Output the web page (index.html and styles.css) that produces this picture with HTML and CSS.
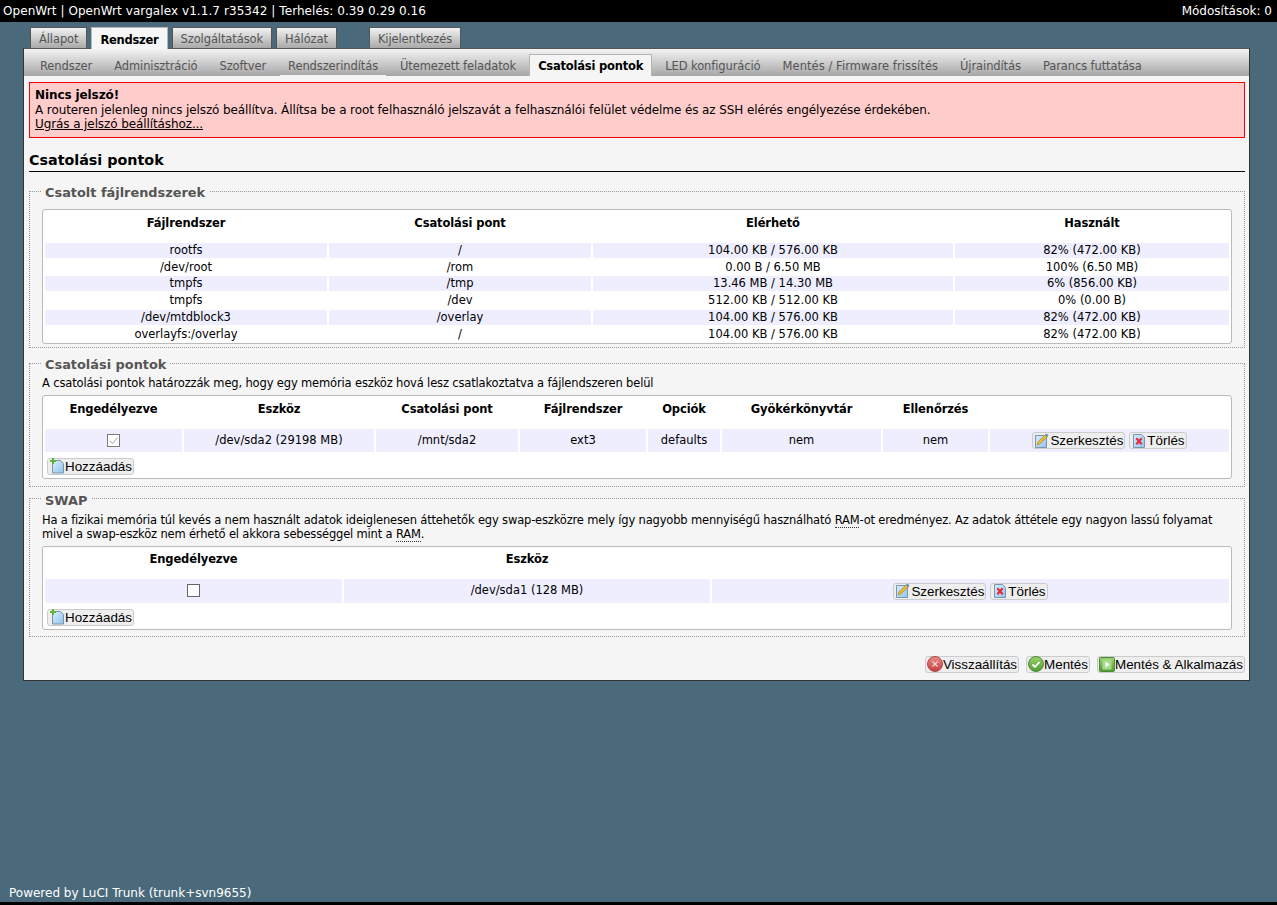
FILE: index.html
```html
<!DOCTYPE html>
<html lang="hu">
<head>
<meta charset="utf-8">
<title>Csatolási pontok - LuCI</title>
<link rel="stylesheet" href="styles.css">
</head>
<body>
<svg class="defs" width="0" height="0" aria-hidden="true">
  <defs>
    <linearGradient id="page" x1="0" y1="0" x2="1" y2="1"><stop offset="0" stop-color="#d8edff"/><stop offset="1" stop-color="#8fc4ee"/></linearGradient>
    <linearGradient id="green" x1="0" y1="0" x2="0" y2="1"><stop offset="0" stop-color="#9bd46c"/><stop offset="1" stop-color="#4f9a35"/></linearGradient>
    <linearGradient id="red" x1="0" y1="0" x2="0" y2="1"><stop offset="0" stop-color="#ee8a8a"/><stop offset="1" stop-color="#c53d3d"/></linearGradient>
    <symbol id="i-add" viewBox="0 0 16 16"><path d="M3.500 2.500h8l3 3v9.500h-11z" fill="url(#page)" stroke="#7d93a6"/><path d="M3 0v2H1v2h2v2h2V4h2V2H5V0z" fill="#5fb336"/></symbol>
    <symbol id="i-edit" viewBox="0 0 16 16"><path d="M1.500 2.500h11v12h-11z" fill="url(#page)" stroke="#7d93a6"/><path d="M3 12l1-3 8-8 2 2-8 8z" fill="#e9b93a" stroke="#a8802a" stroke-width=".6"/><path d="M11 2l2 2 1.500-1.500-2-2z" fill="#5d8fc4"/></symbol>
    <symbol id="i-del" viewBox="0 0 16 16"><path d="M2.500 1.500h8l3 3v10h-11z" fill="url(#page)" stroke="#7d93a6"/><path d="M4.500 6l1.500-1.500L8 6.500l2-2L11.500 6l-2 2.200 2 2.300L10 12l-2-2-2 2-1.500-1.500 2-2.300z" fill="#e22f3c"/></symbol>
    <symbol id="i-reset" viewBox="0 0 16 16"><circle cx="8" cy="8" r="7.500" fill="url(#red)" stroke="#a94b4b"/><path d="M5.500 5.500l5 5m0-5l-5 5" stroke="#f6d4d4" stroke-width="1.300"/></symbol>
    <symbol id="i-save" viewBox="0 0 16 16"><circle cx="8" cy="8" r="7.500" fill="url(#green)" stroke="#4b8a39"/><path d="M4.500 8.500l2.500 2.500 4.500-5" fill="none" stroke="#fff" stroke-width="1.800"/></symbol>
    <symbol id="i-apply" viewBox="0 0 16 16"><rect x=".5" y="1.500" width="15" height="14" rx="1" fill="url(#green)" stroke="#4b8a39"/><rect x="3.500" y="3.500" width="9" height="10" fill="#a8d98c"/><path d="M6.500 5.500l4 3-4 3z" fill="#fff"/></symbol>
  </defs>
</svg>

<header class="topbar">
  <span class="status">OpenWrt | OpenWrt vargalex v1.1.7 r35342 | Terhelés: 0.39 0.29 0.16</span>
  <span>Módosítások: 0</span>
</header>

<nav class="mainnav">
  <a class="maintab">Állapot</a>
  <a class="maintab active">Rendszer</a>
  <a class="maintab">Szolgáltatások</a>
  <a class="maintab">Hálózat</a>
  <a class="maintab logout">Kijelentkezés</a>
</nav>

<main class="panel">
  <nav class="subnav">
    <a class="subtab">Rendszer</a>
    <a class="subtab">Adminisztráció</a>
    <a class="subtab">Szoftver</a>
    <a class="subtab hover">Rendszerindítás</a>
    <a class="subtab">Ütemezett feladatok</a>
    <a class="subtab active">Csatolási pontok</a>
    <a class="subtab">LED konfiguráció</a>
    <a class="subtab wide">Mentés / Firmware frissítés</a>
    <a class="subtab">Újraindítás</a>
    <a class="subtab">Parancs futtatása</a>
  </nav>

  <div class="alert">
    <strong>Nincs jelszó!</strong><br>
    A routeren jelenleg nincs jelszó beállítva. Állítsa be a root felhasználó jelszavát a felhasználói felület védelme és az SSH elérés engélyezése érdekében.<br>
    <a class="alert-link">Ugrás a jelszó beállításhoz...</a>
  </div>

  <h2 class="title">Csatolási pontok</h2>

  <fieldset class="section first">
    <legend>Csatolt fájlrendszerek</legend>
    <div class="tablebox">
      <table class="grid mounted">
        <colgroup><col class="c1a"><col class="c1b"><col class="c1c"><col class="c1d"></colgroup>
        <tr class="head"><th>Fájlrendszer</th><th>Csatolási pont</th><th>Elérhető</th><th>Használt</th></tr>
        <tr class="odd"><td>rootfs</td><td>/</td><td>104.00 KB / 576.00 KB</td><td>82% (472.00 KB)</td></tr>
        <tr><td>/dev/root</td><td>/rom</td><td>0.00 B / 6.50 MB</td><td>100% (6.50 MB)</td></tr>
        <tr class="odd"><td>tmpfs</td><td>/tmp</td><td>13.46 MB / 14.30 MB</td><td>6% (856.00 KB)</td></tr>
        <tr><td>tmpfs</td><td>/dev</td><td>512.00 KB / 512.00 KB</td><td>0% (0.00 B)</td></tr>
        <tr class="odd"><td>/dev/mtdblock3</td><td>/overlay</td><td>104.00 KB / 576.00 KB</td><td>82% (472.00 KB)</td></tr>
        <tr><td>overlayfs:/overlay</td><td>/</td><td>104.00 KB / 576.00 KB</td><td>82% (472.00 KB)</td></tr>
      </table>
    </div>
  </fieldset>

  <fieldset class="section second">
    <legend>Csatolási pontok</legend>
    <p class="desc">A csatolási pontok határozzák meg, hogy egy memória eszköz hová lesz csatlakoztatva a fájlendszeren belül</p>
    <div class="tablebox">
      <table class="grid mounts">
        <colgroup><col class="c2a"><col class="c2b"><col class="c2c"><col class="c2d"><col class="c2e"><col class="c2f"><col class="c2g"><col class="c2h"></colgroup>
        <tr class="head"><th>Engedélyezve</th><th>Eszköz</th><th>Csatolási pont</th><th>Fájlrendszer</th><th>Opciók</th><th>Gyökérkönyvtár</th><th>Ellenőrzés</th><th></th></tr>
        <tr class="odd tall">
          <td><span class="check on"><svg viewBox="0 0 11 11"><path d="M2 6l2.500 2.500L9.500 2.500" fill="none" stroke="#9aa0a6"/></svg></span></td>
          <td>/dev/sda2 (29198 MB)</td><td>/mnt/sda2</td><td>ext3</td><td>defaults</td><td>nem</td><td>nem</td>
          <td class="actions"><button class="btn"><svg class="ico"><use href="#i-edit"/></svg>Szerkesztés</button><button class="btn"><svg class="ico"><use href="#i-del"/></svg>Törlés</button></td>
        </tr>
      </table>
      <div class="addrow"><button class="btn"><svg class="ico"><use href="#i-add"/></svg>Hozzáadás</button></div>
    </div>
  </fieldset>

  <fieldset class="section third">
    <legend>SWAP</legend>
    <p class="desc">Ha a fizikai memória túl kevés a nem használt adatok ideiglenesen áttehetők egy swap-eszközre mely így nagyobb mennyiségű használható <abbr>RAM</abbr>-ot eredményez. Az adatok áttétele egy nagyon lassú folyamat mivel a swap-eszköz nem érhető el akkora sebességgel mint a <abbr>RAM</abbr>.</p>
    <div class="tablebox">
      <table class="grid swap">
        <colgroup><col class="c3a"><col class="c3b"><col class="c3c"></colgroup>
        <tr class="head"><th>Engedélyezve</th><th>Eszköz</th><th></th></tr>
        <tr class="odd tall">
          <td><span class="check"></span></td>
          <td>/dev/sda1 (128 MB)</td>
          <td class="actions"><button class="btn"><svg class="ico"><use href="#i-edit"/></svg>Szerkesztés</button><button class="btn"><svg class="ico"><use href="#i-del"/></svg>Törlés</button></td>
        </tr>
      </table>
      <div class="addrow"><button class="btn"><svg class="ico"><use href="#i-add"/></svg>Hozzáadás</button></div>
    </div>
  </fieldset>

  <div class="formactions">
    <button class="btn"><svg class="ico"><use href="#i-reset"/></svg>Visszaállítás</button>
    <button class="btn"><svg class="ico"><use href="#i-save"/></svg>Mentés</button>
    <button class="btn"><svg class="ico"><use href="#i-apply"/></svg>Mentés &amp; Alkalmazás</button>
  </div>
</main>

<footer class="footer">Powered by LuCI Trunk (trunk+svn9655)</footer>
</body>
</html>
```
FILE: styles.css
```css
* { box-sizing: border-box; }
html, body { height: 100%; }
body {
  margin: 0;
  height: 905px;
  overflow: hidden;
  background: #4a6a7c;
  border-bottom: 3px solid #000;
  display: flex;
  flex-direction: column;
  font-family: "DejaVu Sans", Verdana, sans-serif;
  font-size: 11.5px;
  color: #000;
}
.defs { position: absolute; }

.topbar {
  height: 22px;
  flex: none;
  background: #000;
  color: #fff;
  padding: 0 5px 0 3px;
  display: flex;
  justify-content: space-between;
  align-items: center;
  font-size: 12px;
}
.status { letter-spacing: .07px; }

.mainnav {
  flex: none;
  display: flex;
  gap: 4px;
  height: 26px;
  padding: 5px 0 0 30px;
  align-items: stretch;
}
.maintab {
  padding: 2px 8px 0;
  border: 1px solid #555;
  border-bottom: 0;
  background: linear-gradient(#f2f2f2, #a9a9a9);
  color: #555;
  display: flex;
  align-items: center;
  letter-spacing: -.1px;
}
.maintab.active {
  background: #f6f6f6;
  border-color: #b5b5b5;
  color: #000;
  font-weight: bold;
  letter-spacing: -.25px;
  margin-bottom: -1px;
  position: relative;
  z-index: 2;
}
.maintab.logout { margin-left: 28px; }

.panel {
  flex: none;
  margin-left: 23px;
  width: 1227px;
  height: 633px;
  background: #f5f5f5;
  border: 1px solid #333;
  border-top-color: #555;
  display: flex;
  flex-direction: column;
}

.subnav {
  flex: none;
  display: flex;
  gap: 4px;
  height: 27px;
  padding: 5px 0 0 7px;
  background: linear-gradient(#f4f4f4, #a6a6a6);
}
.subtab {
  padding: 1px 8px 0;
  border: 1px solid transparent;
  border-bottom: 0;
  color: #555;
  display: flex;
  align-items: center;
  letter-spacing: -.1px;
}
.subtab.wide { letter-spacing: .05px; }
.subtab.hover { box-shadow: inset 0 -1px 0 #f5f5f5; }
.subtab.active {
  background: #f5f5f5;
  border-color: #b5b5b5;
  color: #000;
  font-weight: bold;
  letter-spacing: -.2px;
}

.alert {
  flex: none;
  margin: 6px 4px 0 5px;
  height: 56px;
  border: 1px solid #f00;
  background: #fcc;
  padding: 5px 5px;
  font-size: 12px;
  line-height: 14.6px;
  letter-spacing: -.1px;
}
.alert-link { text-decoration: underline; }

.title {
  flex: none;
  margin: 13px 4px 0 5px;
  height: 21px;
  border-bottom: 1px solid #000;
  font-size: 14.3px;
  line-height: 19px;
  font-weight: bold;
}

.section {
  flex: none;
  margin: 0 4px 0 5px;
  padding: 0 12px;
  border: 1px dotted #999;
  min-width: 0;
}
.section.first { margin-top: 9px; padding-bottom: 3px; }
.section.second { margin-top: 5px; padding-bottom: 7px; }
.section.third { margin-top: 2px; padding-bottom: 6px; }
.first .tablebox { margin-top: 8px; }
.section legend {
  padding: 4px 4px 0 3px;
  color: #555;
  font-size: 12.9px;
  font-weight: bold;
  line-height: 16px;
}
.desc {
  margin: 3px 0 4px;
  line-height: 14.500px;
  letter-spacing: -.15px;
}
.third .desc { margin: 4px 0 4px; letter-spacing: -.17px; }

.tablebox {
  background: #fff;
  border: 1px solid #bbb;
  border-radius: 3px;
}

.grid {
  width: 100%;
  table-layout: fixed;
  border-collapse: separate;
  border-spacing: 2px;
}
.grid th {
  padding: 4px 0 0;
  font-weight: bold;
  height: 29px;
  vertical-align: top;
  letter-spacing: -.1px;
}
.swap th { height: 28px; padding-top: 3px; }
.grid td {
  padding: 1px 0 0;
  text-align: center;
  vertical-align: middle;
  height: 14.7px;
  line-height: 13.7px;
}
.grid tr.odd td { background: #eef; }
.grid tr.tall td { height: 23px; }
.swap tr.tall td { height: 24px; }

.c1a { width: 282px; } .c1b { width: 262px; } .c1c { width: 360px; } .c1d { width: auto; }
.c2a { width: 137px; } .c2b { width: 190px; } .c2c { width: 142px; } .c2d { width: 126px; }
.c2e { width: 72px; } .c2f { width: 159px; } .c2g { width: 105px; } .c2h { width: auto; }
.c3a { width: 297px; } .c3b { width: 366px; } .c3c { width: auto; }

.check {
  display: inline-block;
  width: 13px;
  height: 13px;
  border: 1px solid #666;
  background: #fff;
  vertical-align: middle;
}
.check.on { border-color: #7a7a7a; }
.check svg { display: block; width: 11px; height: 11px; }

.btn {
  display: inline-flex;
  align-items: center;
  height: 17px;
  padding: 0 1px;
  margin: 0;
  border: 1px solid #ccc;
  border-radius: 3px;
  background: #eee;
  font-family: "Liberation Sans", Arial, sans-serif;
  font-size: 13.4px;
  color: #000;
  vertical-align: middle;
}
.ico { width: 16px; height: 16px; flex: none; }
.actions { white-space: nowrap; }
.actions .btn + .btn { margin-left: 4px; }
.addrow { padding: 4px 4px 3px; line-height: 0; }

abbr { border-bottom: 1px dotted #333; }

.formactions {
  flex: none;
  display: flex;
  justify-content: flex-end;
  gap: 7px;
  margin-top: 19px;
  padding-right: 4px;
}

.footer {
  margin-top: auto;
  flex: none;
  color: #fff;
  padding: 0 0 1px 9px;
  font-size: 12px;
  line-height: 15px;
}
```
